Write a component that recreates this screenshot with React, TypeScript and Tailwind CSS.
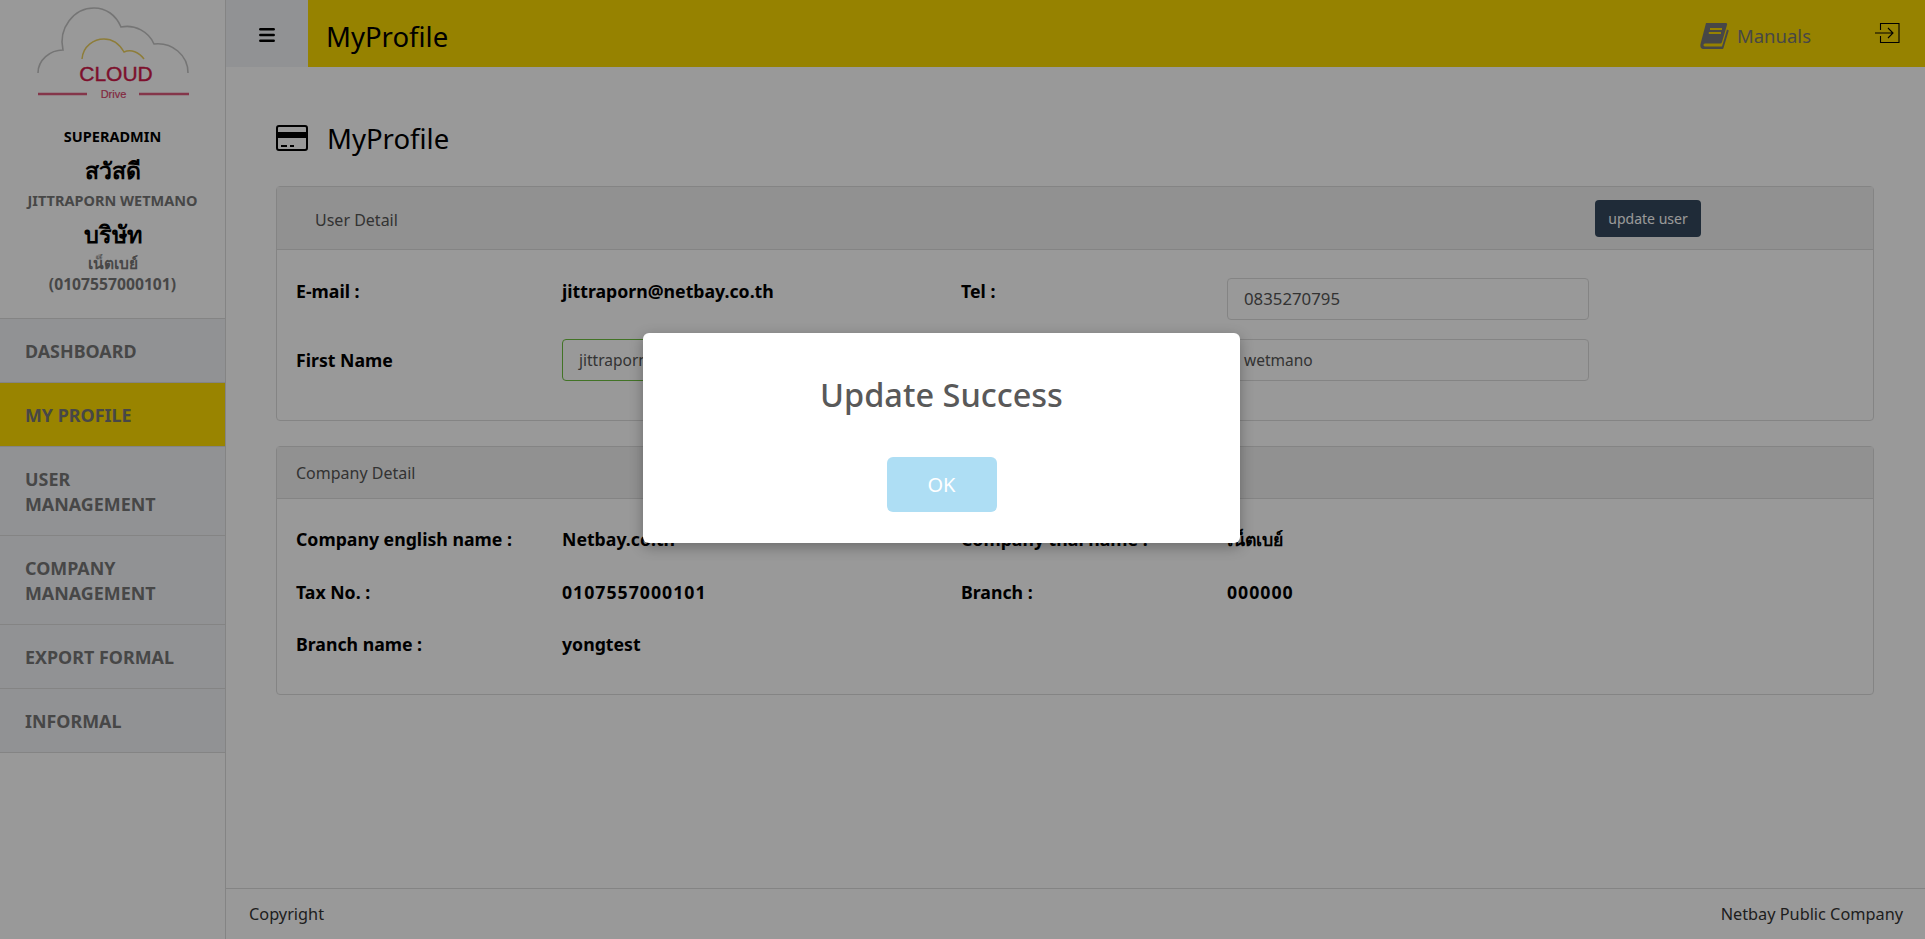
import { Menu } from 'lucide-react';

const ui = "font-['Noto_Sans','Open_Sans',sans-serif]";
const bold = "font-['Noto_Sans','DejaVu_Sans',sans-serif]";

const navItems = [
  { label: 'DASHBOARD', active: false },
  { label: 'MY PROFILE', active: true },
  { label: 'USER MANAGEMENT', active: false },
  { label: 'COMPANY MANAGEMENT', active: false },
  { label: 'EXPORT FORMAL', active: false },
  { label: 'INFORMAL', active: false },
];

function CloudLogo() {
  return (
    <svg width="225" height="100" viewBox="0 0 225 100" fill="none">
      <path
        d="M38 73 C38 60 50 50 63 50 C58 28 74 8 94 8 C106 8 116 15 121 27 C135 24 149 32 154 44 C172 42 188 55 188 73"
        stroke="#c4c4c4"
        strokeWidth="1.6"
      />
      <path d="M82 59 C83 46 94 39 104 39 C113 39 120 45 124 52 C131 49 139 52 144 59" stroke="#ecd060" strokeWidth="1.5" />
      <text x="116" y="81" textAnchor="middle" fontSize="21" fill="#d11c4b" stroke="#d11c4b" strokeWidth="0.4" fontFamily="Liberation Sans, sans-serif">
        CLOUD
      </text>
      <text x="113.500" y="98" textAnchor="middle" fontSize="11" fill="#d9476c" stroke="#d9476c" strokeWidth="0.2" fontFamily="Liberation Sans, sans-serif">
        Drive
      </text>
      <path d="M38 94 H87 M139 94 H189" stroke="#dd5a7c" strokeWidth="2.4" />
    </svg>
  );
}

function BookIcon() {
  return (
    <svg width="29" height="27" viewBox="0 0 29 27">
      <path
        d="M6 1 H26 C27 1 27.500 2 27 3 L22 20 C21.700 21 21 21.500 20 21.500 H5 C3 21.500 3 24.500 5 24.500 H22 L27 7.500 L28.800 8.500 L23.500 26 C23.200 26.600 23 27 22 27 H4 C1 27 0 25 0.500 22 Z"
        fill="#777"
      />
      <path d="M10 7 H22 M8.800 11 H21" stroke="#fad900" strokeWidth="2" />
    </svg>
  );
}

function Field({ value, green, wide }: { value: string; green?: boolean; wide?: boolean }) {
  return (
    <div
      className={`flex h-[42px] w-[362px] items-center rounded border px-4 text-[#555] ${wide ? 'text-[16.8px]' : 'pt-[1px] text-[15.500px]'} ${green ? 'border-[#6fc040]' : 'border-[#ddd]'}`}
    >
      {value}
    </div>
  );
}

function Label({ children }: { children: React.ReactNode }) {
  return <div className={`w-[266px] text-[17.700px] leading-[24px] font-bold text-black ${bold}`}>{children}</div>;
}

function Info({ label, digits, children }: { label: string; digits?: boolean; children: React.ReactNode }) {
  return (
    <div className="flex">
      <Label>{label}</Label>
      <div className={`text-[17.700px] leading-[24px] font-bold text-black ${bold} ${digits ? 'tracking-[1px]' : ''}`}>{children}</div>
    </div>
  );
}

export default function App() {
  return (
    <div className={`relative flex h-[939px] w-full overflow-hidden bg-white ${ui}`}>
      <aside className="flex w-[226px] shrink-0 flex-col border-r border-[#ddd] bg-white">
        <div className="h-[100px]">
          <CloudLogo />
        </div>
        <div className={`flex h-[218px] flex-col items-center pt-[26px] text-center ${bold}`}>
          <div className="text-[14.500px] leading-[20px] font-bold text-black">SUPERADMIN</div>
          <div className="mt-[9px] text-[23px] leading-[30px] font-bold text-black">สวัสดี</div>
          <div className="mt-[5px] text-[14.500px] leading-[20px] font-bold text-[#777]">JITTRAPORN WETMANO</div>
          <div className="mt-[9px] text-[23.500px] leading-[30px] font-bold text-black">บริษัท</div>
          <div className="mt-[3px] text-[15.500px] leading-[22px] font-bold text-[#777]">เน็ตเบย์</div>
          <div className="text-[15.700px] leading-[20px] font-bold text-[#777]">(0107557000101)</div>
        </div>
        <nav className="border-t border-[#ddd]">
          {navItems.map((item) => (
            <div
              key={item.label}
              className={`flex items-center border-b border-[#ddd] px-[25px] pt-[20px] pb-[18px] text-[17.900px] leading-[25px] font-bold text-[#777] ${bold} ${item.active ? 'bg-[#ffdc00]' : 'bg-[#f2f4f7]'}`}
            >
              <span className="max-w-[170px]">{item.label}</span>
            </div>
          ))}
        </nav>
      </aside>

      <div className="flex min-w-0 flex-1 flex-col">
        <header className="flex h-[67px] shrink-0 items-center bg-[#fad900]">
          <div className="flex h-full w-[82px] items-center justify-center bg-[#f2f4f7] pt-[2px]">
            <Menu size={20} strokeWidth={3} className="text-black" />
          </div>
          <div className="ml-[18px] pt-[7px] text-[27.500px] text-black">MyProfile</div>
          <div className="ml-auto flex items-center pt-[4px] pr-[25px]">
            <BookIcon />
            <span className="ml-[8px] text-[18.500px] text-[#777]">Manuals</span>
            <svg width="25" height="22" viewBox="0 0 25 22" fill="none" stroke="black" strokeWidth="1.1" className="mt-[-5px] ml-[64px]">
              <path d="M5.500 8 V1.500 H24 V20.500 H5.500 V14" />
              <path d="M0 11 H18 M13 6 L18 11 L13 16" />
            </svg>
          </div>
        </header>

        <main className="flex-1 pt-[52px] pr-[51px] pl-[50px]">
          <div className="flex h-[38px] items-center gap-[19px]">
            <svg width="32" height="26" viewBox="0 0 32 26" fill="none">
              <rect x="1" y="1" width="30" height="24" rx="2" stroke="black" strokeWidth="2" />
              <rect x="1" y="7" width="30" height="6" fill="black" />
              <path d="M5 21 H11 M14 21 H18" stroke="black" strokeWidth="2" />
            </svg>
            <div className="pt-[1px] text-[27.500px] leading-[38px] text-black">MyProfile</div>
          </div>

          <section className="mt-[29px] rounded border border-[#ddd]">
            <div className="flex h-[63px] items-center border-b border-[#ddd] bg-[#f2f2f2] pl-[38px]">
              <span className="w-[1280px] pt-[3px] text-[16px] text-[#555]">User Detail</span>
              <button className="h-[37px] w-[106px] rounded-sm bg-[#34495e] text-[14px] text-white">update user</button>
            </div>
            <div className="grid h-[170px] grid-cols-[665px_1fr] content-start gap-y-[19px] px-[19px] pt-[28px]">
              <div className="h-[42px] pt-[1px]">
                <Info label="E-mail :">jittraporn@netbay.co.th</Info>
              </div>
              <div className="flex h-[42px] items-start">
                <div className="pt-[1px]">
                  <Label>Tel :</Label>
                </div>
                <Field value="0835270795" wide />
              </div>
              <div className="flex h-[42px] items-center">
                <Label>First Name</Label>
                <Field value="jittraporn" green />
              </div>
              <div className="flex h-[42px] items-center">
                <Label>Last Name</Label>
                <Field value="wetmano" />
              </div>
            </div>
          </section>

          <section className="mt-[25px] rounded border border-[#ddd]">
            <div className="flex h-[52px] items-center border-b border-[#ddd] bg-[#f2f2f2] pl-[19px]">
              <span className="text-[16px] text-[#555]">Company Detail</span>
            </div>
            <div className="grid h-[195px] grid-cols-[665px_1fr] content-start gap-y-[28.500px] px-[19px] pt-[28px]">
              <Info label="Company english name :">Netbay.co.th</Info>
              <Info label="Company thai name :">เน็ตเบย์</Info>
              <Info label="Tax No. :" digits>0107557000101</Info>
              <Info label="Branch :" digits>000000</Info>
              <Info label="Branch name :">yongtest</Info>
            </div>
          </section>
        </main>

        <footer className="flex h-[51px] shrink-0 items-center justify-between border-t border-[#ddd] pr-[22px] pl-[23px] text-[16.300px] text-[#333]">
          <span>Copyright</span>
          <span>Netbay Public Company</span>
        </footer>
      </div>

      {/* swal style dialog */}
      <div className="absolute inset-0 flex items-center justify-center bg-black/40">
        <div className="mr-[42px] mb-[63px] flex h-[210px] w-[597px] flex-col items-center rounded-md bg-white shadow-[0_4px_14px_rgba(0,0,0,0.3)]">
          <div className="mt-[41px] text-[32.500px] leading-[42px] font-medium text-[#595959]">Update Success</div>
          <button className="mt-[41px] h-[55px] w-[110px] rounded-md bg-[#aedef4] text-[20px] text-white">OK</button>
        </div>
      </div>
    </div>
  );
}
